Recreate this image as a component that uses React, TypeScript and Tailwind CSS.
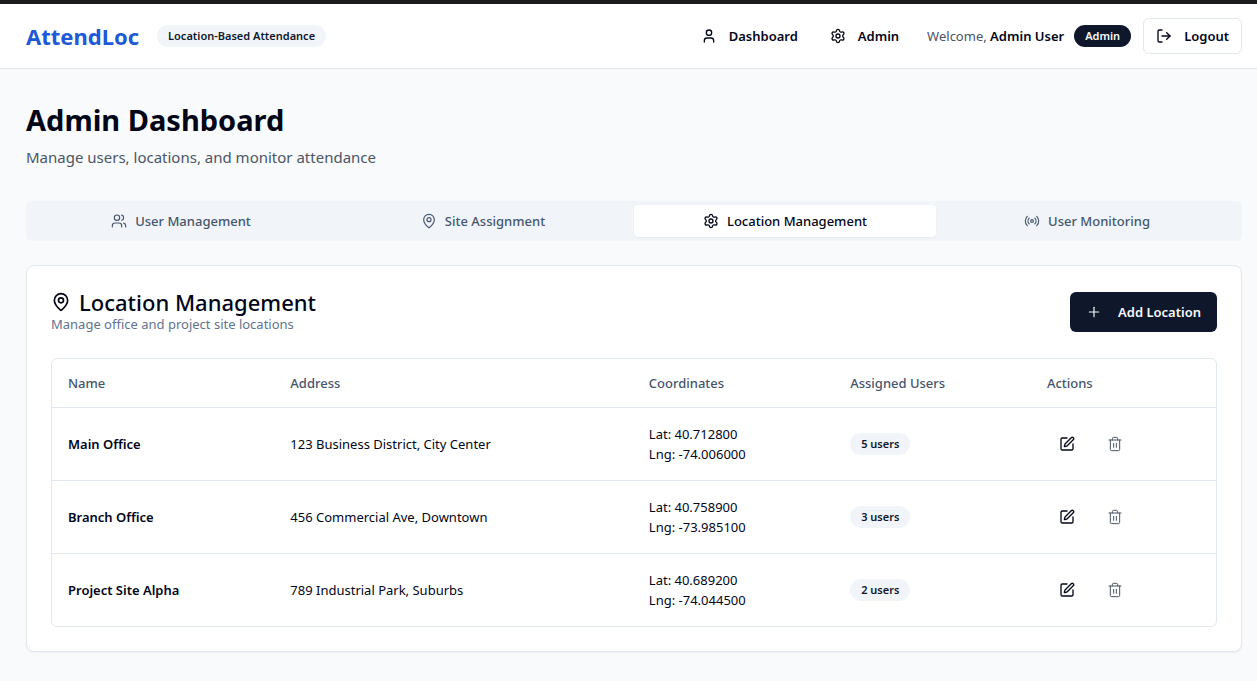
import { useState } from 'react';
import { User, Settings, LogOut, Users, MapPin, Radio, Plus, SquarePen, Trash2 } from 'lucide-react';

const TABS = [
  { id: 'users', label: 'User Management', icon: Users },
  { id: 'sites', label: 'Site Assignment', icon: MapPin },
  { id: 'locations', label: 'Location Management', icon: Settings },
  { id: 'monitoring', label: 'User Monitoring', icon: Radio },
];

const LOCATIONS = [
  { name: 'Main Office', address: '123 Business District, City Center', lat: '40.712800', lng: '-74.006000', users: 5 },
  { name: 'Branch Office', address: '456 Commercial Ave, Downtown', lat: '40.758900', lng: '-73.985100', users: 3 },
  { name: 'Project Site Alpha', address: '789 Industrial Park, Suburbs', lat: '40.689200', lng: '-74.044500', users: 2 },
];

function Badge({ children, dark = false }: { children: React.ReactNode; dark?: boolean }) {
  return (
    <span
      className={`inline-flex rounded-full px-[11px] py-[3px] text-[11px] leading-4 font-semibold ${
        dark ? 'bg-slate-900 text-slate-50' : 'bg-slate-100 text-slate-900'
      }`}
    >
      {children}
    </span>
  );
}

function Header() {
  return (
    <header className="border-t-4 border-b border-t-[#1b1b1d] border-b-gray-200 bg-white">
      <div className="flex h-16 items-center justify-between pl-[26px] pr-[15px]">
        <div className="flex items-center gap-[18px]">
          <span className="text-[22px] font-bold text-[#2158d8]">AttendLoc</span>
          <Badge>Location-Based Attendance</Badge>
        </div>

        <div className="flex items-center text-[13px] leading-5">
          <nav className="flex items-center gap-2">
            <a href="#dashboard" className="flex h-9 items-center gap-3 px-3 font-semibold">
              <User className="size-4" />
              Dashboard
            </a>
            <a href="#admin" className="flex h-9 items-center gap-3 px-3 font-semibold">
              <Settings className="size-4" />
              Admin
            </a>
          </nav>
          <div className="ml-4 flex items-center">
            <span className="mr-[10px] text-gray-600">
              Welcome, <span className="font-semibold text-slate-950">Admin User</span>
            </span>
            <Badge dark>Admin</Badge>
            <button className="ml-3 flex h-9 items-center gap-3 rounded-md border border-slate-200 bg-white px-3 font-semibold">
              <LogOut className="size-4" />
              Logout
            </button>
          </div>
        </div>
      </div>
    </header>
  );
}

export default function App() {
  const [activeTab, setActiveTab] = useState('locations');

  return (
    <div className="min-h-screen bg-[#f9fafb] font-['Noto_Sans','Segoe_UI',sans-serif] text-slate-950">
      <Header />

      <main className="pt-8 pr-[15px] pb-7 pl-[26px]">
        <h1 className="text-[29px] leading-[38px] font-bold">Admin Dashboard</h1>
        <p className="mt-[6px] text-[15px] leading-6 text-gray-600">Manage users, locations, and monitor attendance</p>

        <div role="tablist" className="mt-8 grid h-10 grid-cols-4 rounded-md bg-slate-100 p-1">
          {TABS.map(({ id, label, icon: Icon }) => (
            <button
              key={id}
              role="tab"
              aria-selected={activeTab === id}
              onClick={() => setActiveTab(id)}
              className={`flex items-center justify-center gap-2 rounded text-[13px] leading-5 font-medium ${
                activeTab === id ? 'bg-white text-slate-950 shadow-xs' : 'text-slate-600'
              }`}
            >
              <Icon className="size-4" strokeWidth={activeTab === id ? 2 : 1.75} />
              {label}
            </button>
          ))}
        </div>

        <section className="mt-6 rounded-lg border border-slate-200 bg-white p-6 shadow-xs">
          <div className="flex items-center justify-between">
            <div>
              <h2 className="flex items-center gap-2 text-[22px] leading-6 font-medium">
                <MapPin className="size-5" />
                Location Management
              </h2>
              <p className="text-[13px] leading-5 text-slate-500">Manage office and project site locations</p>
            </div>
            <button className="flex h-10 items-center gap-4 rounded-md bg-slate-900 px-4 text-[13px] leading-5 font-semibold text-slate-50">
              <Plus className="size-4" strokeWidth={1.75} />
              Add Location
            </button>
          </div>

          <div className="mt-6 overflow-hidden rounded-md border border-slate-200">
            <table className="w-full table-fixed text-left text-[13px] leading-5">
              <colgroup>
                <col className="w-[19.1%]" />
                <col className="w-[30.8%]" />
                <col className="w-[17.3%]" />
                <col className="w-[16.9%]" />
                <col className="w-[15.9%]" />
              </colgroup>
              <thead>
                <tr className="h-12 border-b border-slate-200 text-slate-600">
                  <th className="px-4 font-medium">Name</th>
                  <th className="px-4 font-medium">Address</th>
                  <th className="px-4 font-medium">Coordinates</th>
                  <th className="px-4 font-medium">Assigned Users</th>
                  <th className="px-4 font-medium">Actions</th>
                </tr>
              </thead>
              <tbody>
                {LOCATIONS.map((loc) => (
                  <tr key={loc.name} className="border-b border-slate-200 last:border-b-0">
                    <td className="p-4 font-semibold">{loc.name}</td>
                    <td className="p-4">{loc.address}</td>
                    <td className="p-4">
                      <div>Lat: {loc.lat}</div>
                      <div>Lng: {loc.lng}</div>
                    </td>
                    <td className="p-4">
                      <Badge>{loc.users} users</Badge>
                    </td>
                    <td className="p-4">
                      <div className="flex gap-2">
                        <button aria-label={`Edit ${loc.name}`} className="flex h-9 items-center px-3">
                          <SquarePen className="size-4" />
                        </button>
                        <button aria-label={`Delete ${loc.name}`} className="flex h-9 items-center px-3 text-gray-600">
                          <Trash2 className="size-4" strokeWidth={1.5} />
                        </button>
                      </div>
                    </td>
                  </tr>
                ))}
              </tbody>
            </table>
          </div>
        </section>
      </main>
    </div>
  );
}
